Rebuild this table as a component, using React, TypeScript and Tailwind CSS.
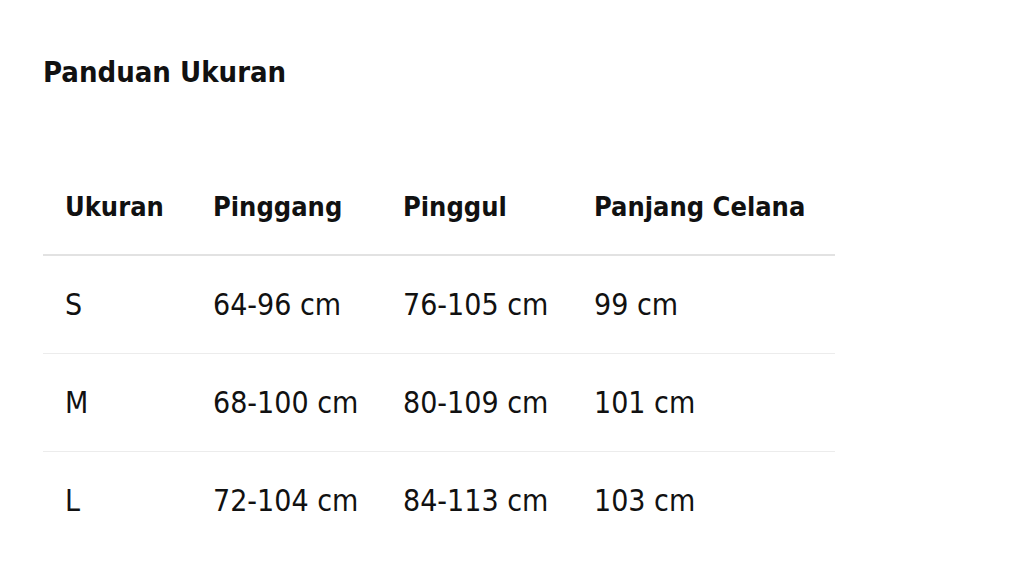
const rows = [
  { size: 'S', waist: '64-96 cm', hip: '76-105 cm', length: '99 cm' },
  { size: 'M', waist: '68-100 cm', hip: '80-109 cm', length: '101 cm' },
  { size: 'L', waist: '72-104 cm', hip: '84-113 cm', length: '103 cm' },
];

const font = { fontFamily: '"Liberation Sans Narrow", "DejaVu Sans Condensed", "Liberation Sans", sans-serif' };

export default function App() {
  return (
    <div className="w-[1030px] h-[570px] bg-white text-[#111] overflow-hidden" style={font}>
      <div className="pl-[43px] pt-[50px]">
        <h2 className="text-[29px] leading-[44px] font-bold whitespace-nowrap">Panduan Ukuran</h2>
        <table className="mt-[66px] w-[792px] border-collapse table-fixed whitespace-nowrap">
          <colgroup>
            <col className="w-[148px]" />
            <col className="w-[190px]" />
            <col className="w-[191px]" />
            <col className="w-[263px]" />
          </colgroup>
          <thead>
            <tr className="h-[95px] border-b-2 border-[#e2e2e2]">
              <th className="text-left pl-[22px] text-[27px] font-bold">Ukuran</th>
              <th className="text-left pl-[22px] text-[27px] font-bold">Pinggang</th>
              <th className="text-left pl-[22px] text-[27px] font-bold">Pinggul</th>
              <th className="text-left pl-[22px] text-[27px] font-bold">Panjang Celana</th>
            </tr>
          </thead>
          <tbody>
            {rows.map((r, i) => (
              <tr key={r.size} className={`h-[98px] ${i < rows.length - 1 ? 'border-b border-[#ececec]' : ''}`}>
                <td className="pl-[22px] text-[30px]">{r.size}</td>
                <td className="pl-[22px] text-[30px]">{r.waist}</td>
                <td className="pl-[22px] text-[30px]">{r.hip}</td>
                <td className="pl-[22px] text-[30px]">{r.length}</td>
              </tr>
            ))}
          </tbody>
        </table>
      </div>
    </div>
  );
}
